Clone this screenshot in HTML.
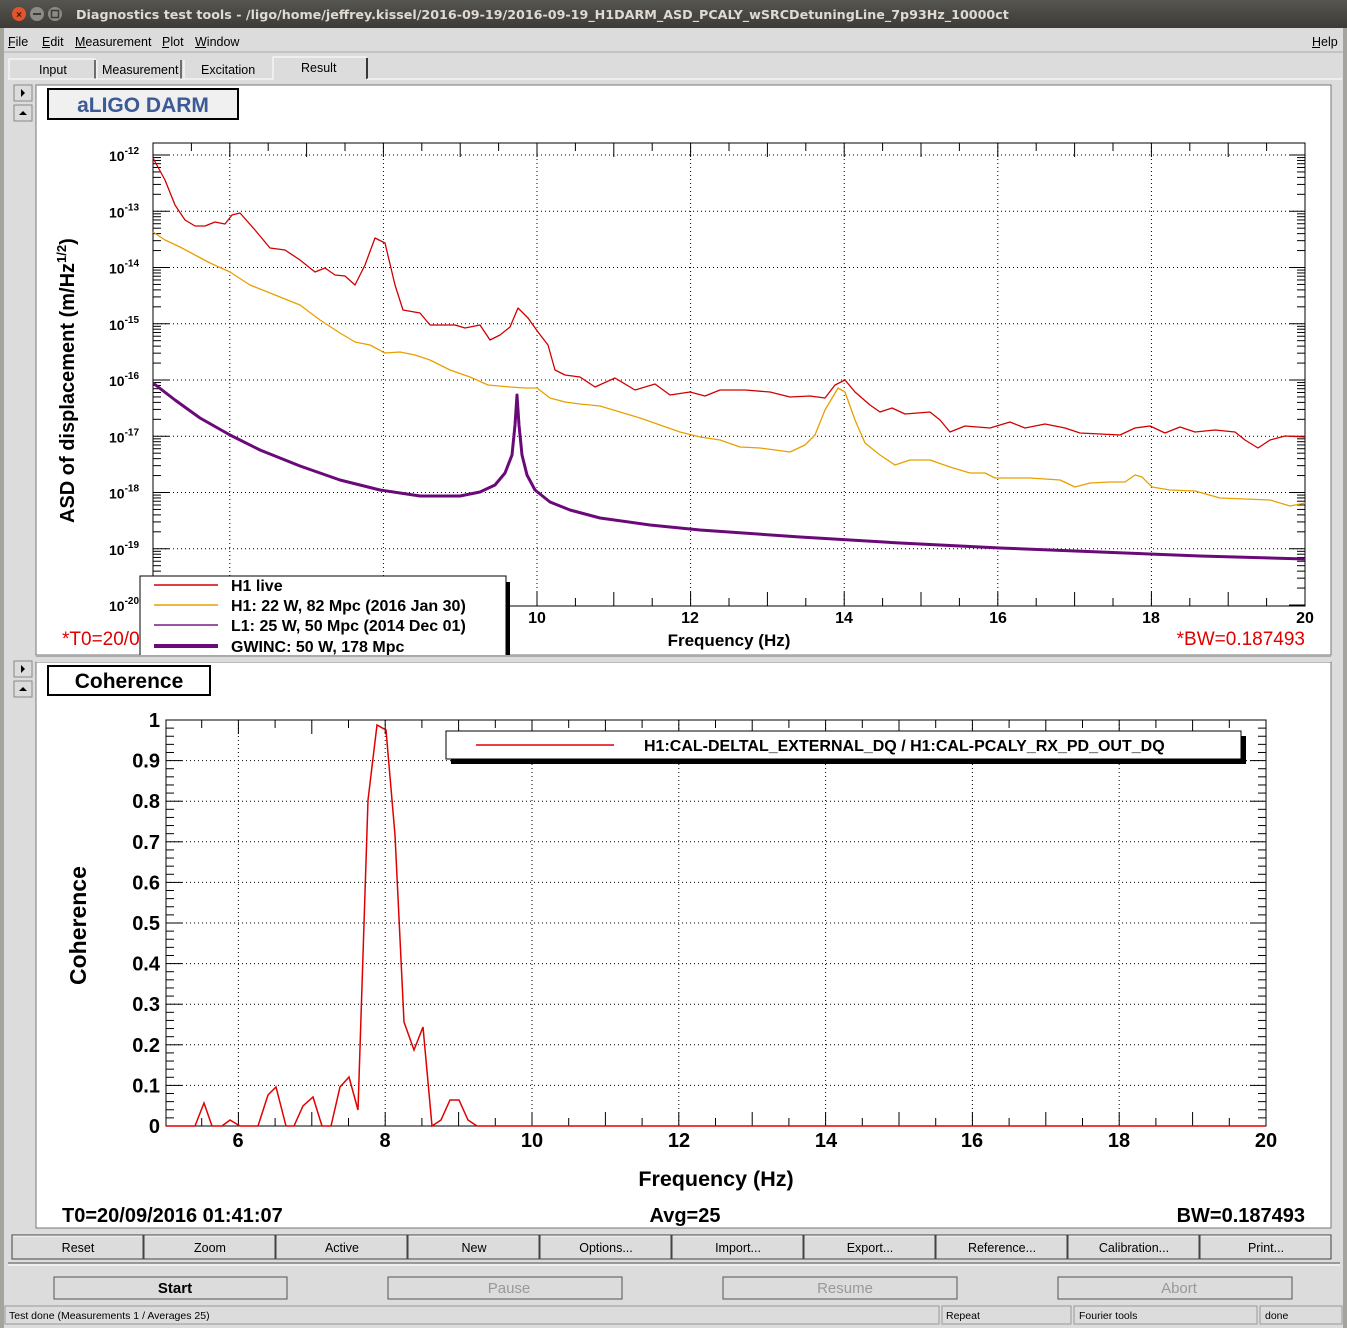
<!DOCTYPE html>
<html><head><meta charset="utf-8"><style>
html,body{margin:0;padding:0;background:#dcdcdc;width:1347px;height:1328px;overflow:hidden}
svg{display:block;font-family:"Liberation Sans",sans-serif}
</style></head><body>
<svg id="s" width="1347" height="1328" xmlns="http://www.w3.org/2000/svg">
<defs><linearGradient id="tb" x1="0" y1="0" x2="0" y2="1"><stop offset="0" stop-color="#57554f"/><stop offset="1" stop-color="#3c3b37"/></linearGradient></defs>
<rect width="1347" height="1328" fill="#dcdcdc"/>
<rect width="1347" height="28" fill="url(#tb)"/>
<circle cx="19" cy="14" r="7" fill="#e2542c"/><text x="19" y="18" font-size="10" text-anchor="middle" fill="#3a1a10" font-weight="bold">×</text>
<circle cx="37" cy="14" r="7" fill="#8d8b85"/><rect x="33" y="13" width="8" height="2" fill="#3c3b37"/>
<circle cx="55" cy="14" r="7" fill="#8d8b85"/><rect x="51.5" y="10.5" width="7" height="7" fill="none" stroke="#3c3b37" stroke-width="1.5"/>
<text x="76" y="19" font-size="12.7" font-weight="bold" fill="#dfdbd2" font-family="DejaVu Sans,sans-serif">Diagnostics test tools - /ligo/home/jeffrey.kissel/2016-09-19/2016-09-19_H1DARM_ASD_PCALY_wSRCDetuningLine_7p93Hz_10000ct</text>
<rect x="0" y="28" width="4" height="1300" fill="#a5a39e"/><rect x="1343" y="28" width="4" height="1300" fill="#a5a39e"/>
<g font-size="12.5" fill="#000">
<text x="8" y="46">File</text><text x="42" y="46">Edit</text><text x="75" y="46">Measurement</text><text x="162" y="46">Plot</text><text x="195" y="46">Window</text><text x="1312" y="46">Help</text>
</g>
<g stroke="#000"><line x1="8" y1="47.5" x2="15" y2="47.5"/><line x1="42" y1="47.5" x2="50" y2="47.5"/><line x1="75" y1="47.5" x2="86" y2="47.5"/><line x1="162" y1="47.5" x2="169" y2="47.5"/><line x1="195" y1="47.5" x2="206" y2="47.5"/><line x1="1312" y1="47.5" x2="1320" y2="47.5"/></g>
<line x1="4" y1="52" x2="1343" y2="52" stroke="#aaa"/>
<g font-size="12.5">
<rect x="9" y="59" width="86" height="20" fill="#dcdcdc" stroke="#fff"/><line x1="95" y1="60" x2="95" y2="79" stroke="#000"/>
<text x="39" y="74">Input</text>
<line x1="97" y1="60" x2="97" y2="79" stroke="#fff"/><line x1="181" y1="60" x2="181" y2="79" stroke="#000"/><text x="102" y="74">Measurement</text>
<line x1="184" y1="60" x2="184" y2="79" stroke="#fff"/><text x="201" y="74">Excitation</text>
<polyline points="273,79 273,57 367,57" fill="none" stroke="#fff"/><line x1="367" y1="58" x2="367" y2="79" stroke="#000" stroke-width="1.5"/>
<text x="301" y="72">Result</text>
</g>
<line x1="8" y1="79" x2="273" y2="79" stroke="#fff"/><line x1="367" y1="79" x2="1342" y2="79" stroke="#fff"/>
<g fill="#dcdcdc" stroke-width="1">
<rect x="14" y="85" width="18" height="16" stroke="#888"/><path d="M21 89 L25 93 L21 97Z" fill="#000"/>
<rect x="14" y="105" width="18" height="16" stroke="#888"/><path d="M19 115 L27 115 L23 111Z" fill="#000"/>
<rect x="14" y="661" width="18" height="16" stroke="#888"/><path d="M21 665 L25 669 L21 673Z" fill="#000"/>
<rect x="14" y="681" width="18" height="16" stroke="#888"/><path d="M19 691 L27 691 L23 687Z" fill="#000"/>
</g>
<rect x="36" y="85" width="1295" height="570" fill="#fff" stroke="#777"/>
<rect x="36" y="662" width="1295" height="566" fill="#fff" stroke="#777"/>
<rect x="48" y="89" width="190" height="30" fill="#f0f0f0" stroke="#000" stroke-width="2"/>
<text x="143" y="112" font-size="21" font-weight="bold" fill="#3c5a96" text-anchor="middle">aLIGO DARM</text>
<rect x="48" y="666" width="162" height="29" fill="#fff" stroke="#000" stroke-width="2"/>
<text x="129" y="688" font-size="21" font-weight="bold" text-anchor="middle">Coherence</text>
<g id="p1"></g>
<rect x="153" y="143" width="1152" height="463" fill="none" stroke="#000"/>
<g fill="none" stroke-linejoin="round">
<polyline stroke="#e8a000" stroke-width="1.3" points="153,232 165,240 180,247 195,255 210,263 230,272 250,285 275,295 300,305 320,320 340,333 355,342 370,345 385,353 400,352 415,355 430,360 450,370 470,377 488,385 510,387 525,388 537,388 550,398 565,402 580,404 600,406 620,412 640,418 660,425 680,432 700,437 720,440 740,447 760,448 790,452 805,445 815,435 825,410 838,388 845,392 855,420 865,443 880,455 895,465 910,460 930,460 950,467 970,473 985,473 995,478 1030,478 1060,480 1075,487 1090,483 1110,482 1125,482 1135,475 1142,477 1152,487 1170,490 1195,491 1220,498 1245,499 1270,500 1290,506 1305,503"/>
<polyline stroke="#d00000" stroke-width="1.3" points="153,158 165,180 175,205 185,220 195,226 205,226 215,222 225,224 232,215 240,213 255,230 270,248 285,250 300,260 315,272 325,268 335,275 345,276 355,285 365,265 375,238 385,243 395,285 403,310 420,313 430,325 455,325 465,328 480,325 490,340 500,335 510,327 518,308 528,318 538,332 548,345 555,370 565,375 580,377 595,387 615,378 635,390 655,384 670,395 690,392 705,396 720,390 745,390 770,392 790,397 810,396 825,398 835,385 845,380 855,392 870,405 880,412 892,408 905,414 930,412 940,420 950,432 965,426 990,428 1010,422 1025,428 1045,424 1065,428 1080,433 1100,434 1120,435 1135,428 1150,426 1165,433 1180,427 1195,432 1215,430 1235,432 1245,440 1258,448 1270,440 1285,436 1305,437"/>
<polyline stroke="#6a0a78" stroke-width="3" points="153,383 175,400 200,418 230,435 260,450 300,466 340,480 380,490 420,496 460,496 480,492 495,485 505,473 512,455 515,425 517,395 519,425 522,455 527,475 535,490 550,502 570,510 600,518 650,525 700,530 800,537 900,543 1000,548 1100,552 1200,556 1305,559"/>
</g>
<g font-size="16" font-weight="bold" text-anchor="middle">
<text x="537" y="623">10</text><text x="690" y="623">12</text><text x="844" y="623">14</text><text x="998" y="623">16</text><text x="1151" y="623">18</text><text x="1305" y="623">20</text>
<text x="729" y="646" font-size="17">Frequency (Hz)</text>
</g>
<text x="62" y="645" font-size="19" fill="#e00000">*T0=20/0</text>
<text x="1305" y="645" font-size="19" fill="#e00000" text-anchor="end">*BW=0.187493</text>
<text transform="translate(74,523) rotate(-90)" font-size="20" font-weight="bold">ASD of displacement (m/Hz<tspan font-size="13" dy="-8">1/2</tspan><tspan dy="8">)</tspan></text>
<g id="ylab1" font-size="14" font-weight="bold"></g>
<rect x="140" y="576" width="366" height="80" fill="#fff" stroke="#000"/>
<rect x="506" y="582" width="4" height="73" fill="#000"/>
<g stroke-width="1.5"><line x1="154" y1="585" x2="218" y2="585" stroke="#d00000"/><line x1="154" y1="605" x2="218" y2="605" stroke="#e8a000"/><line x1="154" y1="625" x2="218" y2="625" stroke="#7a1a88"/><line x1="154" y1="646" x2="218" y2="646" stroke="#6a0a78" stroke-width="4"/></g>
<g font-size="16" font-weight="bold"><text x="231" y="591">H1 live</text><text x="231" y="611">H1: 22 W, 82 Mpc (2016 Jan 30)</text><text x="231" y="631">L1: 25 W, 50 Mpc (2014 Dec 01)</text><text x="231" y="652">GWINC: 50 W, 178 Mpc</text></g>
<rect x="36" y="655" width="1295" height="7" fill="#dcdcdc"/>
<line x1="36" y1="656" x2="1331" y2="656" stroke="#777"/>
<g id="p2"></g>
<rect x="166" y="720" width="1100" height="406" fill="none" stroke="#000"/>
<polyline fill="none" stroke="#e00000" stroke-width="1.5" points="166,1126 195,1126 204,1103 212,1126 222,1126 230,1120 240,1126 258,1126 268,1095 276,1087 286,1126 294,1126 303,1106 313,1097 322,1126 331,1126 340,1087 349,1077 358,1110 368,800 377,725 386,730 395,835 404,1022 414,1050 423,1027 432,1126 441,1120 450,1100 459,1100 468,1120 477,1126 1266,1126"/>
<rect x="451" y="736" width="795" height="28" fill="#000"/>
<rect x="446" y="731" width="795" height="28" fill="#fff" stroke="#000"/>
<line x1="476" y1="745" x2="614" y2="745" stroke="#e00000" stroke-width="1.5"/>
<text x="644" y="751" font-size="16" font-weight="bold">H1:CAL-DELTAL_EXTERNAL_DQ / H1:CAL-PCALY_RX_PD_OUT_DQ</text>
<g id="ylab2" font-size="20" font-weight="bold" text-anchor="end"></g>
<g font-size="20" font-weight="bold" text-anchor="middle">
<text x="238" y="1147">6</text><text x="385" y="1147">8</text><text x="532" y="1147">10</text><text x="679" y="1147">12</text><text x="826" y="1147">14</text><text x="972" y="1147">16</text><text x="1119" y="1147">18</text><text x="1266" y="1147">20</text>
<text x="716" y="1186" font-size="21.5">Frequency (Hz)</text>
<text x="685" y="1222">Avg=25</text>
</g>
<text transform="translate(86,985) rotate(-90)" font-size="23" font-weight="bold">Coherence</text>
<text x="62" y="1222" font-size="20" font-weight="bold">T0=20/09/2016 01:41:07</text>
<text x="1305" y="1222" font-size="20" font-weight="bold" text-anchor="end">BW=0.187493</text>
<g id="btns" font-size="12.5" text-anchor="middle"></g>
<line x1="8" y1="1263" x2="1340" y2="1263" stroke="#555"/>
<line x1="8" y1="1265" x2="1340" y2="1265" stroke="#fff"/>
<g font-size="15" font-weight="bold" text-anchor="middle">
<rect x="54" y="1277" width="233" height="22" fill="#dcdcdc" stroke="#555"/><text x="175" y="1293">Start</text>
<rect x="388" y="1277" width="234" height="22" fill="#dcdcdc" stroke="#555"/><text x="509" y="1293" fill="#999" font-weight="normal">Pause</text>
<rect x="723" y="1277" width="234" height="22" fill="#dcdcdc" stroke="#555"/><text x="845" y="1293" fill="#999" font-weight="normal">Resume</text>
<rect x="1058" y="1277" width="234" height="22" fill="#dcdcdc" stroke="#555"/><text x="1179" y="1293" fill="#999" font-weight="normal">Abort</text>
</g>
<g font-size="10.5" fill="none" stroke="#999">
<rect x="5" y="1306" width="934" height="18"/><rect x="942" y="1306" width="129" height="18"/><rect x="1074" y="1306" width="183" height="18"/><rect x="1260" y="1306" width="82" height="18"/>
</g>
<g font-size="10.5"><text x="9" y="1319">Test done (Measurements 1 / Averages 25)</text><text x="946" y="1319">Repeat</text><text x="1079" y="1319">Fourier tools</text><text x="1265" y="1319">done</text></g>
</svg>
<script>
var NS="http://www.w3.org/2000/svg";
function el(p,t,a,txt){var e=document.createElementNS(NS,t);for(var k in a)e.setAttribute(k,a[k]);if(txt!=null)e.textContent=txt;document.getElementById(p).appendChild(e);return e;}
var x0=153,x1=1305,y0=143,y1=606;
function X1(f){return 153+(f-5)*76.8;}
function Y1(e){return 605-(e+20)*56.25;}
for(var f=6;f<20;f+=2){el("p1","line",{x1:X1(f),y1:y0,x2:X1(f),y2:y1,stroke:"#000","stroke-dasharray":"1,3"});}
for(var e=-19;e<=-12;e++){el("p1","line",{x1:x0,y1:Y1(e),x2:x1,y2:Y1(e),stroke:"#000","stroke-dasharray":"1,3"});}
for(var f=5;f<=20;f+=0.5){var L=(f%1==0)?14:8;el("p1","line",{x1:X1(f),y1:y0,x2:X1(f),y2:y0+L,stroke:"#000"});el("p1","line",{x1:X1(f),y1:y1,x2:X1(f),y2:y1-L,stroke:"#000"});}
for(var e=-20;e<=-12;e++){for(var m=1;m<10;m++){var y=Y1(e+Math.log10(m));if(y<y0)continue;var L=m==1?16:8;el("p1","line",{x1:x0,y1:y,x2:x0+L,y2:y,stroke:"#000"});el("p1","line",{x1:x1,y1:y,x2:x1-L,y2:y,stroke:"#000"});}}
for(var e=-20;e<=-12;e++){var t=el("ylab1","text",{x:109,y:Y1(e)+6});t.textContent="10";var s=document.createElementNS(NS,"tspan");s.setAttribute("font-size","10");s.setAttribute("dy","-7");s.textContent=String(e);t.appendChild(s);}
function X2(f){return 165+(f-5)*73.4;}
function Y2(v){return 1126-v*406;}
for(var f=6;f<20;f+=2){el("p2","line",{x1:X2(f),y1:720,x2:X2(f),y2:1126,stroke:"#000","stroke-dasharray":"1,3"});}
for(var i=1;i<10;i++){el("p2","line",{x1:166,y1:Y2(i/10),x2:1266,y2:Y2(i/10),stroke:"#000","stroke-dasharray":"1,3"});}
for(var f=5.5;f<=20;f+=0.5){var L=(f%1==0)?14:8;el("p2","line",{x1:X2(f),y1:1126,x2:X2(f),y2:1126-L,stroke:"#000"});el("p2","line",{x1:X2(f),y1:720,x2:X2(f),y2:720+L,stroke:"#000"});}
for(var i=0;i<=50;i++){var L=(i%5==0)?16:8;var y=Y2(i/50);el("p2","line",{x1:166,y1:y,x2:166+L,y2:y,stroke:"#000"});el("p2","line",{x1:1266,y1:y,x2:1266-L,y2:y,stroke:"#000"});}
for(var i=0;i<=10;i++){el("ylab2","text",{x:160,y:Y2(i/10)+7},i==0?"0":i==10?"1":(i/10).toFixed(1));}
var nm=["Reset","Zoom","Active","New","Options...","Import...","Export...","Reference...","Calibration...","Print..."];
for(var i=0;i<10;i++){var x=12+i*132;el("btns","rect",{x:x,y:1235,width:131,height:24,fill:"#dcdcdc",stroke:"#444"});el("btns","line",{x1:x+1,y1:1236,x2:x+130,y2:1236,stroke:"#fff"});el("btns","text",{x:x+66,y:1252},nm[i]);}
</script>
</body></html>
